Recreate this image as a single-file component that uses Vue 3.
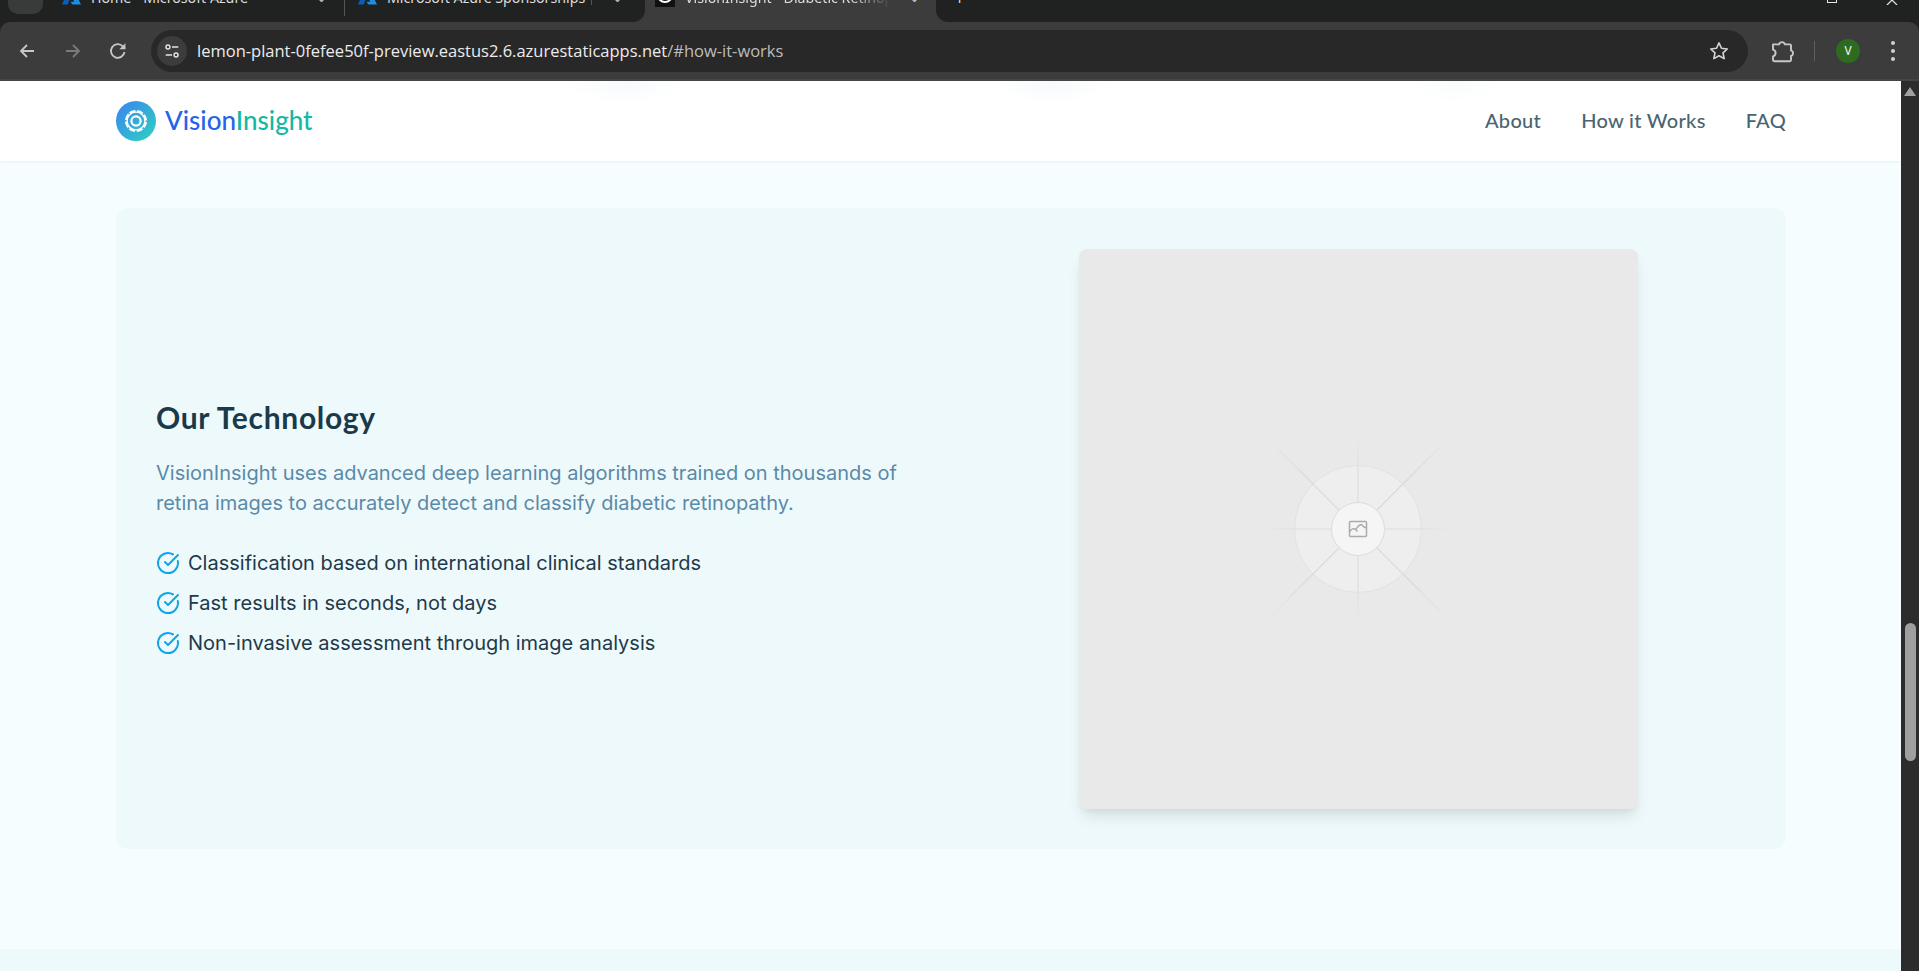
<script setup>
const items = [
  'Classification based on international clinical standards',
  'Fast results in seconds, not days',
  'Non-invasive assessment through image analysis'
]
const rays = [
  [1, 0, 92, 'rayfade-h'], [-1, 0, 92, 'rayfade-h'], [0, 1, 92, 'rayfade-h'], [0, -1, 92, 'rayfade-h'],
  [0.707, 0.707, 128, 'rayfade-d'], [-0.707, 0.707, 128, 'rayfade-d'],
  [0.707, -0.707, 128, 'rayfade-d'], [-0.707, -0.707, 128, 'rayfade-d']
]
</script>

<template>
  <div class="window">
    <div class="strip">
      <div class="strip-left">
        <span class="round-btn"></span>
        <div class="tab tab-one">
          <svg class="azure" viewBox="0 0 20 16"><path d="M7 0h5L6 16H0z" fill="#0a5fb5"/><path d="M12 0l8 16h-9l-2-3 4 0-4-7z" fill="#1c8fe3"/></svg>
          <span class="tab-title">Home - Microsoft Azure</span>
          <span class="tab-chev">⌄</span>
        </div>
        <span class="sep"></span>
        <div class="tab tab-two">
          <svg class="azure" viewBox="0 0 20 16"><path d="M7 0h5L6 16H0z" fill="#0a5fb5"/><path d="M12 0l8 16h-9l-2-3 4 0-4-7z" fill="#1c8fe3"/></svg>
          <span class="tab-title">Microsoft Azure Sponsorships</span>
          <span class="sep small"></span>
          <span class="tab-chev">⌄</span>
        </div>
      </div>
      <div class="tab-active">
        <svg class="fav" viewBox="0 0 20 20"><rect width="20" height="20" fill="#111"/><circle cx="10" cy="8" r="7" fill="none" stroke="#fff" stroke-width="2"/><circle cx="10" cy="8" r="3" fill="none" stroke="#fff" stroke-width="2"/></svg>
        <span class="tab-title fade">VisionInsight - Diabetic Retinopathy</span>
        <span class="tab-chev">⌄</span>
      </div>
      <div class="strip-right">
        <span class="plus">+</span>
        <span class="controls">
          <span class="ctl-max"></span>
          <svg class="ctl-x" viewBox="0 0 12 5"><path d="M1 5l5-5 5 5" fill="none" stroke="#e6e6e6" stroke-width="1.2"/></svg>
        </span>
      </div>
    </div>

    <div class="toolbar">
      <svg class="tb-icon back" viewBox="0 0 24 24"><path d="M19 12H6M12 6l-6 6 6 6" fill="none" stroke="#c7c7c7" stroke-width="1.8"/></svg>
      <svg class="tb-icon fwd" viewBox="0 0 24 24"><path d="M5 12h13M12 6l6 6-6 6" fill="none" stroke="#7b7b7b" stroke-width="1.8"/></svg>
      <svg class="tb-icon reload" viewBox="0 0 24 24"><path d="M18.5 13a6.8 6.8 0 1 1-1.7-5.6L19 9.6" fill="none" stroke="#c7c7c7" stroke-width="1.8"/><path d="M19.4 4.2v6h-6z" fill="#c7c7c7"/></svg>
      <div class="omnibox">
        <span class="site-chip">
          <svg viewBox="0 0 20 20" width="18" height="18"><circle cx="5.5" cy="5.5" r="2.2" fill="none" stroke="#e3e3e3" stroke-width="1.6"/><path d="M10 5.5h7M3 14.5h7" stroke="#e3e3e3" stroke-width="1.6"/><circle cx="14.5" cy="14.5" r="2.2" fill="none" stroke="#e3e3e3" stroke-width="1.6"/></svg>
        </span>
        <span class="url">lemon-plant-0fefee50f-preview.eastus2.6.azurestaticapps.net<span class="url-dim">/#how-it-works</span></span>
        <svg class="star" viewBox="0 0 24 24"><path d="M12 3.2l2.7 5.8 6.3.8-4.6 4.3 1.2 6.2-5.6-3.1-5.6 3.1 1.2-6.2L3 9.8l6.3-.8z" fill="none" stroke="#d4d4d4" stroke-width="1.8" stroke-linejoin="round"/></svg>
      </div>
      <svg class="tb-icon ext" viewBox="2 1.5 20 20"><path d="M4.5 6h5a2.6 2.6 0 0 1 5 0h4a1 1 0 0 1 1 1v4a2.4 2.4 0 0 1 0 4.6V19a1 1 0 0 1-1 1H5.5a1 1 0 0 1-1-1v-3a2.9 2.9 0 0 0 0-5.6V6.5z" fill="none" stroke="#c7c7c7" stroke-width="1.6" stroke-linejoin="round"/></svg>
      <span class="tb-div"></span>
      <span class="avatar">V</span>
      <span class="menu"><i></i><i></i><i></i></span>
    </div>

    <div class="viewport">
      <div class="page">
        <header class="nav">
          <div class="brand">
            <span class="brand-mark">
              <svg viewBox="0 0 24 24" width="24" height="24">
                <circle cx="12" cy="12" r="9.6" fill="none" stroke="#fff" stroke-width="2.8"/>
                <circle cx="12" cy="12" r="10.2" fill="none" stroke="#46a9dc" stroke-width="1.6" stroke-dasharray="1.8 6.21" stroke-dashoffset="0.9"/>
                <circle cx="12" cy="12" r="4.6" fill="none" stroke="#fff" stroke-width="2.2"/>
              </svg>
            </span>
            <span class="brand-text"><span class="b1">Vision</span><span class="b2">Insight</span></span>
          </div>
          <nav class="links">
            <a>About</a>
            <a>How it Works</a>
            <a>FAQ</a>
          </nav>
        </header>

        <main class="section">
          <div class="card">
            <div class="copy">
              <h2>Our Technology</h2>
              <p>VisionInsight uses advanced deep learning algorithms trained on thousands of retina images to accurately detect and classify diabetic retinopathy.</p>
              <ul>
                <li v-for="item in items" :key="item">
                  <svg viewBox="0 0 24 24" width="24" height="24" fill="none" stroke="#0ea5e9" stroke-width="2" stroke-linecap="round" stroke-linejoin="round"><path d="M21.801 10A10 10 0 1 1 17 3.335"/><path d="m9 11 3 3L22 4"/></svg>
                  <span>{{ item }}</span>
                </li>
              </ul>
            </div>
            <div class="media">
              <div class="placeholder">
                <svg viewBox="-130 -130 260 260" width="260" height="260">
                  <defs>
                    <radialGradient id="rayfade-h" gradientUnits="userSpaceOnUse" cx="0" cy="0" r="92">
                      <stop offset="0.7" stop-color="#dddddd"/>
                      <stop offset="1" stop-color="#dddddd" stop-opacity="0"/>
                    </radialGradient>
                    <radialGradient id="rayfade-d" gradientUnits="userSpaceOnUse" cx="0" cy="0" r="128">
                      <stop offset="0.6" stop-color="#d9d9d9"/>
                      <stop offset="1" stop-color="#d9d9d9" stop-opacity="0"/>
                    </radialGradient>
                  </defs>
                  <circle r="63.5" fill="#eeeeee" stroke="#e2e2e2" stroke-width="1"/>
                  <line v-for="(r, i) in rays" :key="i" :x1="r[0] * 26" :y1="r[1] * 26" :x2="r[0] * r[2]" :y2="r[1] * r[2]" :stroke="`url(#${r[3]})`" stroke-width="1.2"/>
                  <circle r="26.5" fill="#f5f5f5" stroke="#dcdcdc" stroke-width="1"/>
                  <g fill="none" stroke="#ababab" stroke-width="1.5" stroke-linejoin="round">
                    <rect x="-8.5" y="-7.5" width="17" height="15" rx="1"/>
                    <path d="M-8.5 3C-6.5-.5-4.5-1-2.5.5L-.5 2.5"/>
                    <path d="M-2.5.5L1-3.5 3.5-4.5 6-2 8.5-1"/>
                  </g>
                </svg>
              </div>
            </div>
          </div>
        </main>
        <div class="next"></div>
      </div>
      <aside class="scrollbar">
        <span class="arrow"></span>
        <span class="thumb"></span>
      </aside>
    </div>
  </div>
</template>

<style>
html, body { margin: 0; overflow: hidden; }
</style>

<style scoped>
* { box-sizing: border-box; }
.window {
  width: 1919px;
  height: 971px;
  display: flex;
  flex-direction: column;
  overflow: hidden;
  background: #202221;
  font-family: "Noto Sans", sans-serif;
}
.strip {
  height: 22px;
  flex: none;
  display: flex;
  background: #3c3c3c;
  overflow: hidden;
}
.strip-left {
  width: 645px;
  background: #202221;
  border-bottom-right-radius: 12px;
  display: flex;
  align-items: flex-start;
  padding-left: 8px;
}
.round-btn {
  width: 35px;
  height: 14px;
  background: #393b3a;
  border-radius: 0 0 10px 10px;
  flex: none;
}
.tab {
  display: flex;
  align-items: center;
  height: 20px;
  margin-top: -13px;
  flex: none;
}
.tab-one { width: 301px; padding-left: 19px; }
.tab-two { width: 300px; padding-left: 13px; }
.azure { width: 19px; height: 18px; flex: none; }
.tab-title {
  font-size: 14.2px;
  color: #dcdcdc;
  margin-left: 10px;
  white-space: nowrap;
}
.tab-chev {
  color: #d0d0d0;
  font-size: 13px;
  margin-left: auto;
  padding-right: 17px;
}
.tab-two .tab-chev { padding-right: 22px; }
.sep { width: 1px; height: 16px; background: #555; flex: none; }
.sep.small { margin-left: 6px; }
.tab-active {
  width: 291px;
  flex: none;
  display: flex;
  align-items: center;
  height: 20px;
  margin-top: -13px;
  padding-left: 10px;
  overflow: hidden;
}
.fav { width: 20px; height: 20px; flex: none; }
.fade {
  width: 206px;
  overflow: hidden;
  -webkit-mask-image: linear-gradient(90deg, #000 80%, transparent);
  mask-image: linear-gradient(90deg, #000 80%, transparent);
}
.tab-active .tab-chev { padding-right: 16px; }
.strip-right {
  flex: 1;
  background: #202221;
  border-bottom-left-radius: 12px;
  display: flex;
  align-items: flex-start;
  padding-left: 19px;
}
.plus { color: #e0e0e0; font-size: 16px; line-height: 14px; margin-top: -8px; }
.controls {
  margin-left: auto;
  display: flex;
  align-items: flex-start;
  gap: 49px;
  padding-right: 21px;
}
.ctl-max { width: 10px; height: 3px; border: 1px solid #e6e6e6; border-top: none; }
.ctl-x { width: 12px; height: 5px; }
.toolbar {
  height: 59px;
  flex: none;
  display: flex;
  align-items: center;
  background: #3c3c3c;
  border-radius: 10px 10px 0 0;
  border-bottom: 2px solid #454545;
}
.tb-icon { width: 24px; height: 24px; flex: none; }
.back { margin-left: 15px; }
.fwd { margin-left: 22px; }
.reload { margin-left: 21px; }
.omnibox {
  margin-left: 21px;
  width: 1597px;
  height: 42px;
  border-radius: 21px;
  background: #282828;
  display: flex;
  align-items: center;
  padding-left: 6px;
  flex: none;
}
.site-chip {
  width: 30px;
  height: 30px;
  border-radius: 50%;
  background: #3c3c3c;
  display: flex;
  align-items: center;
  justify-content: center;
  flex: none;
}
.url {
  margin-left: 10px;
  color: #ececec;
  font-family: "Open Sans", sans-serif;
  font-size: 16.5px;
  white-space: nowrap;
}
.url-dim { color: #bdbdbd; }
.star { width: 22px; height: 22px; margin-left: auto; margin-right: 18px; }
.ext { margin-left: 22px; }
.tb-div { width: 1px; height: 20px; background: #5f5f5f; margin-left: 20px; flex: none; }
.avatar {
  width: 24px;
  height: 24px;
  border-radius: 50%;
  background: #2f6b1e;
  color: #f2f2f2;
  font-size: 12px;
  display: flex;
  align-items: center;
  justify-content: center;
  margin-left: 21px;
  flex: none;
}
.menu {
  display: flex;
  flex-direction: column;
  gap: 4px;
  margin-left: 31px;
  flex: none;
}
.menu i { width: 4px; height: 4px; border-radius: 50%; background: #d0d0d0; display: block; }
.viewport {
  flex: 1;
  min-height: 0;
  display: flex;
}
.page {
  flex: 1;
  min-width: 0;
  display: flex;
  flex-direction: column;
  background: #f5fdff;
}
.nav {
  height: 80px;
  flex: none;
  display: flex;
  align-items: center;
  justify-content: space-between;
  padding: 0 115px 0 116px;
  background:
    radial-gradient(ellipse 60px 22px at 625px 0, #f7f9fb, transparent),
    radial-gradient(ellipse 60px 22px at 1052px 0, #f7f9fb, transparent),
    radial-gradient(ellipse 45px 22px at 1456px 0, #f9fbfb, transparent),
    #ffffff;
  box-shadow: 0 1px 3px rgba(20, 80, 100, 0.07);
  position: relative;
  z-index: 1;
}
.brand { display: flex; align-items: center; gap: 9px; }
.brand-mark {
  width: 40px;
  height: 40px;
  border-radius: 50%;
  background: linear-gradient(135deg, #3b82f0, #2dd4bf);
  display: flex;
  align-items: center;
  justify-content: center;
}
.brand-text {
  font-family: Lato, sans-serif;
  font-size: 26px;
  font-weight: 500;
  margin-bottom: 2px;
}
.b1 { color: #2563eb; }
.b2 { color: #14b8a6; }
.links { display: flex; gap: 40px; margin-bottom: 3px; }
.links a {
  font-family: Lato, sans-serif;
  font-size: 20px;
  letter-spacing: 0.3px;
  font-weight: 500;
  color: #4a6572;
}
.section {
  height: 788px;
  flex: none;
  padding: 47px 115px 0 116px;
}
.card {
  height: 641px;
  background: #eef9fb;
  border-radius: 12px;
  padding: 41px 40px 40px;
  display: grid;
  grid-template-columns: 1fr 1fr;
  gap: 40px;
  align-items: center;
}
.copy { padding-bottom: 1px; }
.copy h2 {
  margin: 0 0 24px;
  font-family: Lato, sans-serif;
  font-size: 30px;
  letter-spacing: 0.7px;
  line-height: 34px;
  font-weight: 700;
  color: #1a3a4a;
}
.copy p {
  margin: 0 0 31px;
  font-family: Inter, sans-serif;
  font-size: 20px;
  line-height: 30px;
  color: #5a8aa8;
}
.copy ul {
  list-style: none;
  margin: 0;
  padding: 0;
  display: flex;
  flex-direction: column;
  gap: 12px;
}
.copy li {
  display: flex;
  align-items: center;
  gap: 8px;
  font-family: Inter, sans-serif;
  font-size: 20px;
  line-height: 28px;
  color: #1e3a4a;
}
.copy li svg { flex: none; }
.media { display: flex; justify-content: center; padding-right: 1px; }
.placeholder {
  width: 559px;
  height: 560px;
  border-radius: 8px;
  background: #e9e9e9;
  box-shadow: 0 10px 15px -3px rgba(0, 0, 0, 0.1), 0 4px 6px -2px rgba(0, 0, 0, 0.05);
  display: flex;
  align-items: center;
  justify-content: center;
}
.next { flex: 1; background: #eef9fb; }
.scrollbar {
  width: 18px;
  flex: none;
  background: #2c2c2c;
  display: flex;
  flex-direction: column;
  align-items: center;
}
.arrow {
  margin-top: 6px;
  width: 0;
  height: 0;
  border-left: 6px solid transparent;
  border-right: 6px solid transparent;
  border-bottom: 9px solid #a0a0a0;
}
.thumb {
  margin-top: 527px;
  width: 11px;
  height: 138px;
  border-radius: 6px;
  background: #9f9f9f;
}
</style>
